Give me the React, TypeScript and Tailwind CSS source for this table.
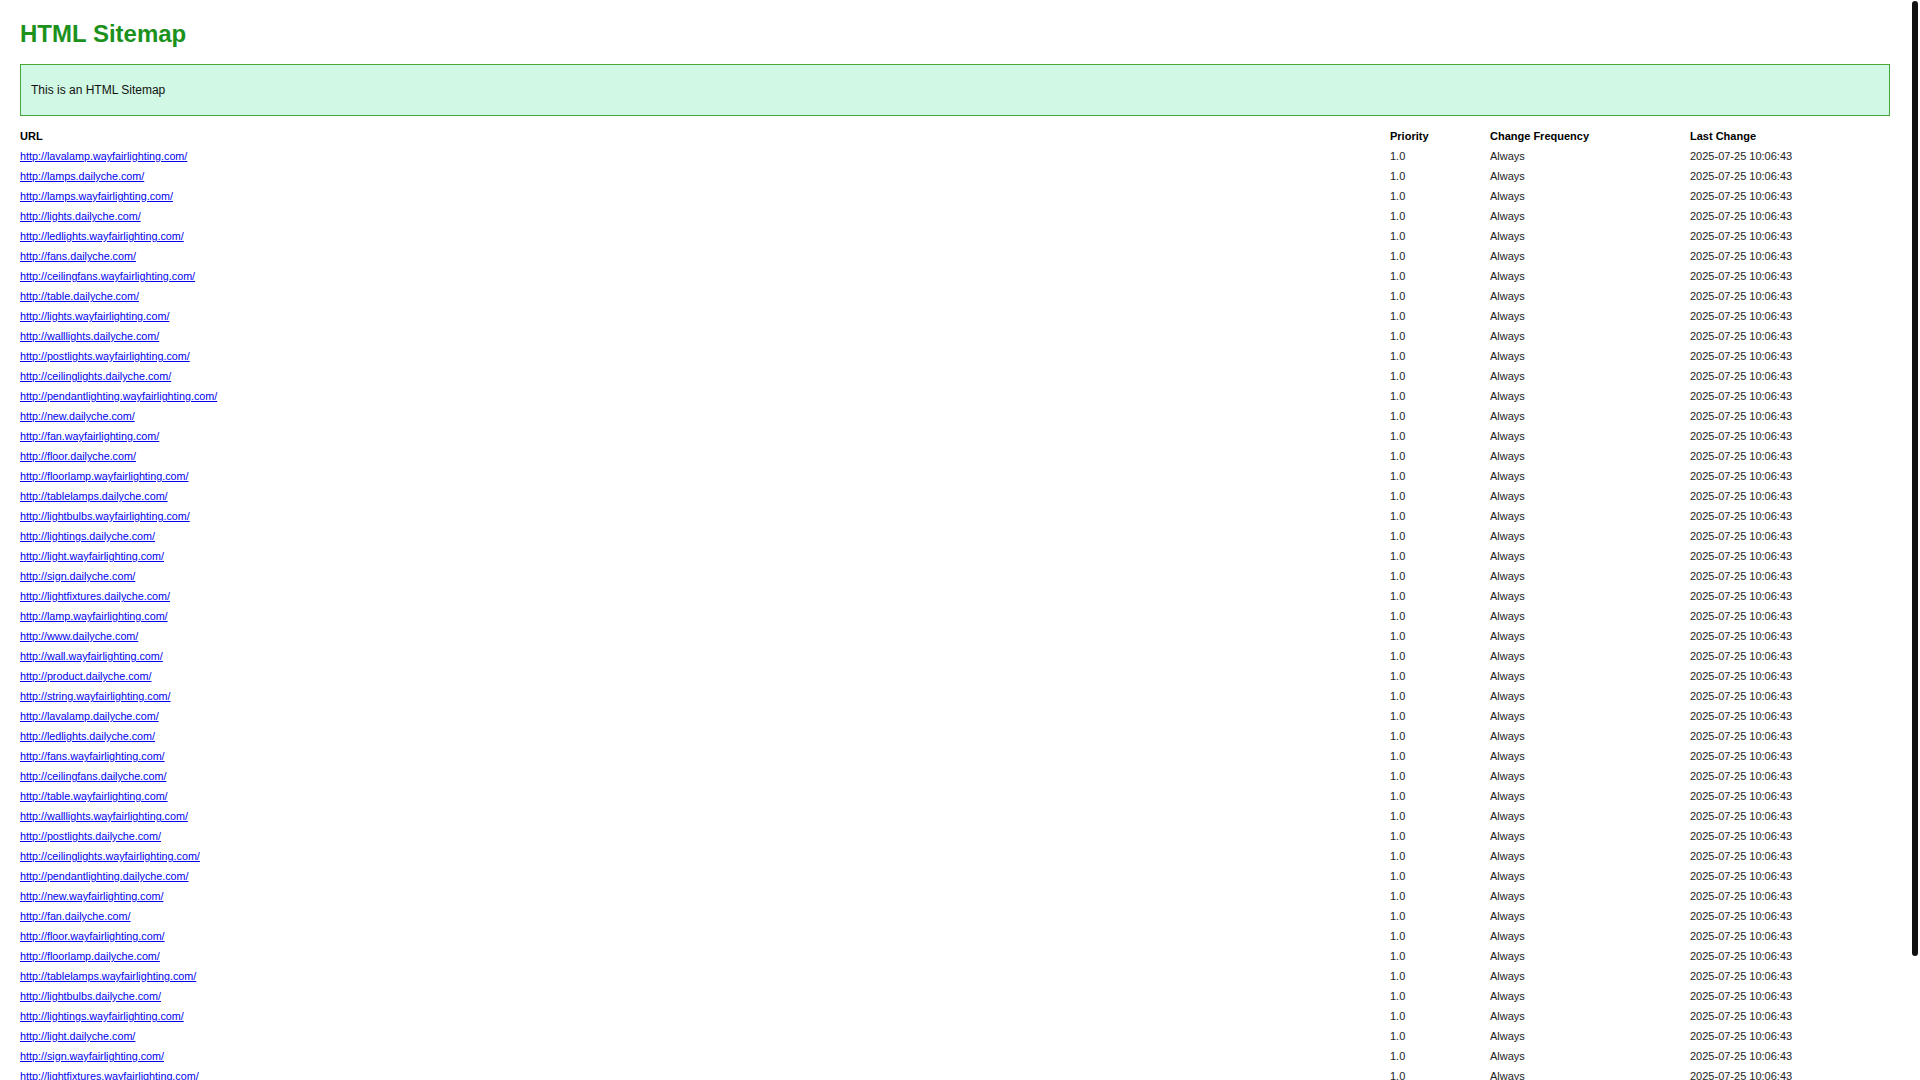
import React from "react";

const known: string[] = [
  "lavalamp.wayfairlighting.com",
  "lamps.dailyche.com",
  "lamps.wayfairlighting.com",
  "lights.dailyche.com",
  "ledlights.wayfairlighting.com",
  "fans.dailyche.com",
  "ceilingfans.wayfairlighting.com",
  "table.dailyche.com",
  "lights.wayfairlighting.com",
  "walllights.dailyche.com",
  "postlights.wayfairlighting.com",
  "ceilinglights.dailyche.com",
  "pendantlighting.wayfairlighting.com",
  "new.dailyche.com",
  "fan.wayfairlighting.com",
  "floor.dailyche.com",
  "floorlamp.wayfairlighting.com",
  "tablelamps.dailyche.com",
  "lightbulbs.wayfairlighting.com",
  "lightings.dailyche.com",
  "light.wayfairlighting.com",
  "sign.dailyche.com",
  "lightfixtures.dailyche.com",
  "lamp.wayfairlighting.com",
  "www.dailyche.com",
  "wall.wayfairlighting.com",
  "product.dailyche.com",
  "string.wayfairlighting.com",
  "lavalamp.dailyche.com",
  "ledlights.dailyche.com",
  "fans.wayfairlighting.com",
  "ceilingfans.dailyche.com",
  "table.wayfairlighting.com",
  "walllights.wayfairlighting.com",
  "postlights.dailyche.com",
  "ceilinglights.wayfairlighting.com",
  "pendantlighting.dailyche.com",
  "new.wayfairlighting.com",
  "fan.dailyche.com",
  "floor.wayfairlighting.com",
  "floorlamp.dailyche.com",
  "tablelamps.wayfairlighting.com",
  "lightbulbs.dailyche.com",
  "lightings.wayfairlighting.com",
  "light.dailyche.com",
  "sign.wayfairlighting.com",
  "lightfixtures.wayfairlighting.com",
  "lamp.dailyche.com",
  "www.wayfairlighting.com",
  "wall.dailyche.com",
  "product.wayfairlighting.com",
  "string.dailyche.com",
];

const urls: string[] = known.map((k) => "http://" + k + "/");

export default function App() {
  return (
    <div
      className="bg-white pt-[20px] pb-[20px] pl-[20px]"
      style={{ fontFamily: '"Liberation Sans", Arial, sans-serif' }}
    >
      <h1 className="text-[24px] font-bold leading-[28px] text-[#1c921c] m-0">
        HTML Sitemap
      </h1>
      <div className="mt-[16px] w-[1870px] border border-[#46a836] bg-[#d0f8e4] px-[10px] py-[18px] text-[12px] leading-[14px] text-[#111]">
        This is an HTML Sitemap
      </div>
      <div className="mt-[10px] w-[1870px] text-[11px] text-[#222]">
        <div className="grid grid-cols-[1370px_100px_200px_200px] h-[20px] leading-[20px] font-bold text-black">
          <div>URL</div>
          <div>Priority</div>
          <div>Change Frequency</div>
          <div>Last Change</div>
        </div>
        {urls.map((u, i) => (
          <div
            key={i}
            className="grid grid-cols-[1370px_100px_200px_200px] h-[20px] leading-[20px]"
          >
            <div>
              <a href={u} className="text-[10.75px] text-[#0000ee] underline">
                {u}
              </a>
            </div>
            <div>1.0</div>
            <div>Always</div>
            <div>2025-07-25 10:06:43</div>
          </div>
        ))}
      </div>
      <div className="fixed top-[1px] right-[2px] w-[6px] h-[955px] rounded-[3px] bg-[#111]" />
    </div>
  );
}
